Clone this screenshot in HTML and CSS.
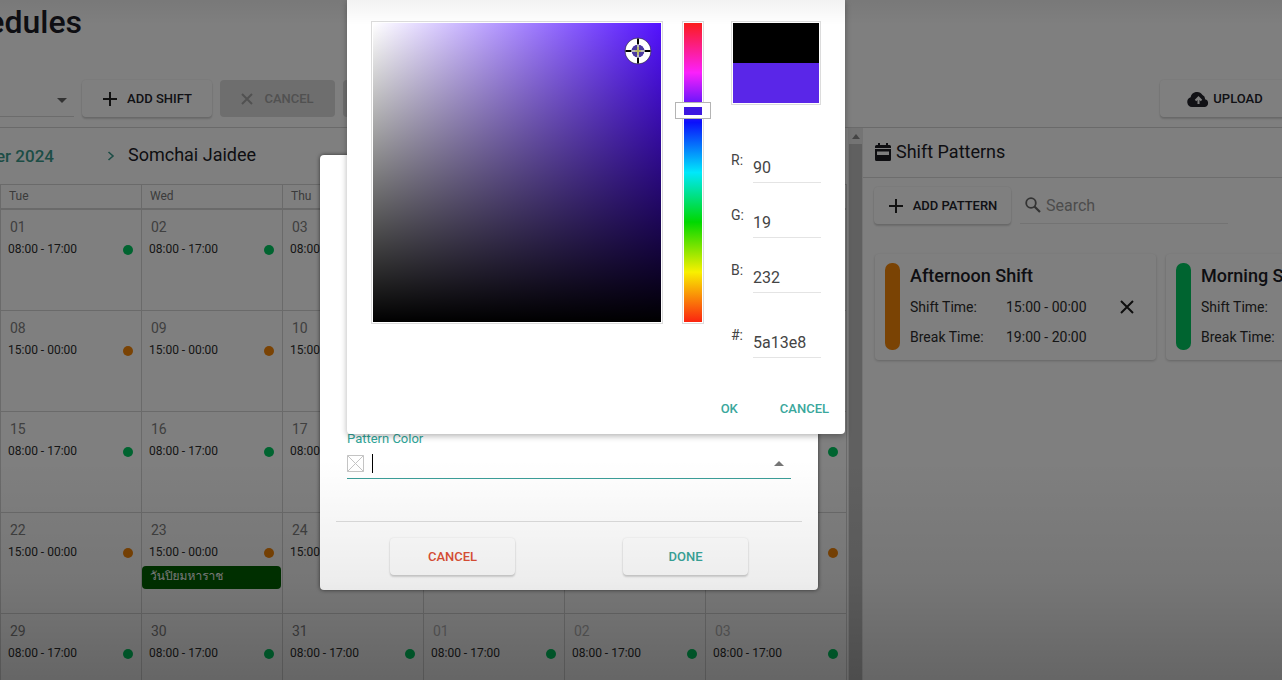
FILE: index.html
```html
<!DOCTYPE html>
<html lang="en">
<head>
<meta charset="utf-8">
<title>Schedules</title>
<link rel="stylesheet" href="styles.css">
</head>
<body>
<div class="app">
  <header class="page-head"><h1 class="page-title">Schedules</h1></header>
  <div class="toolbar">
    <div class="toolbar-select"><svg width="10" height="5" viewBox="0 0 10 5"><path d="M0 0h10L5 5z" fill="#666"/></svg></div>
    <button class="btn btn-add"><svg width="16" height="16" viewBox="0 0 16 16"><path d="M8 1v14M1 8h14" stroke="#222" stroke-width="2"/></svg>ADD SHIFT</button>
    <button class="btn btn-disabled" disabled><svg width="12" height="12" viewBox="0 0 12 12"><path d="M1 1l10 10M11 1L1 11" stroke="#a2a2a2" stroke-width="2"/></svg>CANCEL</button>
    <button class="btn btn-disabled btn-blank" disabled aria-label="Save"></button>
    <button class="btn btn-upload"><svg width="22" height="16" viewBox="0 0 22 16"><path d="M5 16a5 5 0 0 1-1.400-9.700A6.500 6.500 0 0 1 15.500 4 4 4 0 0 1 18 8.200 4 4 0 0 1 18 16z" fill="#22222a"/><path d="M11.500 13V7M8.500 9.500l3-3 3 3" stroke="#fff" stroke-width="2" fill="none"/></svg>UPLOAD</button>
  </div>
  <main class="main">
    <section class="calendar">
      <div class="cal-head">
        <div class="month">October 2024</div>
        <button class="next" aria-label="Next month"><svg width="8" height="10" viewBox="0 0 8 10"><path d="M1.500 1L6 5 1.500 9" stroke="#3a9a8c" stroke-width="1.600" fill="none"/></svg></button>
        <h2 class="person">Somchai Jaidee</h2>
      </div>
      <table class="cal">
        <thead><tr><th>Tue</th><th>Wed</th><th>Thu</th><th>Fri</th><th>Sat</th><th>Sun</th></tr></thead>
        <tbody id="weeks"></tbody>
      </table>
    </section>
    <div class="scroll"><div class="scroll-up"><svg width="8" height="5" viewBox="0 0 8 5"><path d="M0 5h8L4 0z" fill="#8a8a8a"/></svg></div><div class="scroll-thumb"></div></div>
    <aside class="patterns">
      <h2 class="patterns-title"><svg width="16" height="18" viewBox="0 0 16 18"><path d="M1.500 2H3V0h2v2h6V0h2v2h1.500Q16 2 16 3.500V5H0V3.500Q0 2 1.500 2zM0 6h16v10.500q0 1.500-1.500 1.500h-13Q0 18 0 16.500zM2 8.500V12h12V8.500z" fill="#1c1c22" fill-rule="evenodd"/></svg>Shift Patterns</h2>
      <div class="patterns-tools">
        <button class="btn btn-pattern"><svg width="16" height="16" viewBox="0 0 16 16"><path d="M8 1v14M1 8h14" stroke="#222" stroke-width="2"/></svg>ADD PATTERN</button>
        <label class="search"><svg width="16" height="16" viewBox="0 0 16 16"><circle cx="6" cy="6" r="4.800" stroke="#666" stroke-width="1.800" fill="none"/><path d="M9.500 9.500L15 15" stroke="#666" stroke-width="2.200"/></svg><input type="text" placeholder="Search" aria-label="Search"></label>
      </div>
      <div class="cards">
        <article class="card"><div class="stripe orange"></div>
          <div class="card-body"><h3>Afternoon Shift</h3><dl><dt>Shift Time:</dt><dd>15:00 - 00:00</dd><dt>Break Time:</dt><dd>19:00 - 20:00</dd></dl></div>
          <button class="remove" aria-label="Remove"><svg width="14" height="14" viewBox="0 0 14 14"><path d="M1 1l12 12M13 1L1 13" stroke="#1c1c1c" stroke-width="2"/></svg></button></article>
        <article class="card"><div class="stripe green"></div>
          <div class="card-body"><h3>Morning Shift</h3><dl><dt>Shift Time:</dt><dd>08:00 - 17:00</dd><dt>Break Time:</dt><dd>12:00 - 13:00</dd></dl></div></article>
      </div>
    </aside>
  </main>
</div>
<div class="backdrop"></div>
<div class="dialog" role="dialog" aria-label="Pattern">
  <div class="field">
    <label for="color">Pattern Color</label>
    <div class="field-row">
      <svg width="17" height="17" viewBox="0 0 17 17"><path d="M.5.5h16v16H.5zM.5.5l16 16M16.500.5l-16 16" stroke="#c4c4c4" fill="none"/></svg>
      <span class="caret"></span><input id="color" type="text">
      <svg width="10" height="5" viewBox="0 0 10 5"><path d="M0 5h10L5 0z" fill="#757575"/></svg>
    </div>
  </div>
  <div class="dialog-actions">
    <div><button class="btn btn-wide danger">CANCEL</button></div>
    <div><button class="btn btn-wide accent">DONE</button></div>
  </div>
</div>
<div class="picker" role="dialog" aria-label="Color">
  <div class="picker-body">
    <div class="frame shade"><div class="shade-fill"></div>
      <svg class="cross" width="28" height="28" viewBox="0 0 28 28"><circle cx="14" cy="14" r="9.500" fill="none" stroke="#fff" stroke-width="6.500"/><circle cx="14" cy="14" r="13" fill="none" stroke="#333" stroke-width=".6"/><circle cx="14" cy="14" r="6.300" fill="#4b3aa0"/><path d="M14 1.500v6M14 20.500v6M1.500 14h6M20.500 14h6" stroke="#000" stroke-width="2"/><path d="M14 7.500v13M7.500 14h13" stroke="#bbb" stroke-width="2"/><path d="M14 10v8M11 14h6" stroke="#b5b52c" stroke-width="1"/></svg></div>
    <div class="frame hue"><div class="hue-fill"></div><div class="hue-thumb"><span></span></div></div>
    <div class="side">
      <div class="frame preview"><div class="old"></div><div class="new"></div></div>
      <div class="values">
        <div class="value"><label for="r">R:</label><input id="r" type="text" value="90"></div>
        <div class="value"><label for="g">G:</label><input id="g" type="text" value="19"></div>
        <div class="value"><label for="b">B:</label><input id="b" type="text" value="232"></div>
        <div class="value hex"><label for="h">#:</label><input id="h" type="text" value="5a13e8"></div>
      </div>
    </div>
  </div>
  <div class="picker-actions"><button class="text-btn">OK</button><button class="text-btn">CANCEL</button></div>
</div>
<div class="vignette"></div>
<script src="calendar.js"></script>
</body>
</html>
```
FILE: styles.css
```css
* { box-sizing: border-box; }
body { margin: 0; height: 100vh; overflow: hidden; position: relative; background: #fff; color: #2c2c2c; font-family: Roboto, Tahoma, Loma, "Noto Sans Thai", "Noto Sans", sans-serif; font-size: 14px; }
h1, h2, h3, dl, dd { margin: 0; font-weight: 400; }
button, input { font-family: inherit; }
svg { display: block; flex: none; }
.app { display: flex; flex-direction: column; height: 100vh; }
.page-head { height: 80px; width: 82px; display: flex; justify-content: flex-end; flex: none; padding-top: 2px; }
.page-title { font-size: 32px; line-height: 40px; font-weight: 500; color: #1c1c26; }
.toolbar { display: flex; gap: 8px; height: 48px; flex: none; border-bottom: 1px solid #d4d4d4; padding-bottom: 10px; }
.toolbar-select { width: 74px; display: flex; align-items: center; justify-content: flex-end; padding: 5px 7px 0 0; border-bottom: 1px solid #d8d8d8; }
.btn { display: flex; align-items: center; justify-content: center; height: 37px; border: 0; border-radius: 4px; color: #22222a; font-size: 13px; line-height: 16px; font-weight: 500; padding: 0; flex: none; box-shadow: 0 2px 2px rgba(0,0,0,.16), 0 0 2px rgba(0,0,0,.12); background: #fff; }
.btn-add { width: 130px; gap: 9px; }
.btn-disabled { width: 115px; gap: 11px; background: #dcdcdc; color: #a2a2a2; box-shadow: none; }
.btn-upload { width: 138px; gap: 4px; margin-left: auto; margin-right: -16px; padding-right: 8px; }
.main { display: flex; flex: 1; min-height: 0; }
.calendar { width: 848px; flex: none; overflow: hidden; }
.cal-head { display: flex; align-items: center; height: 56px; color: #1c1c26; }
.month { width: 54px; display: flex; justify-content: flex-end; white-space: nowrap; font-size: 17px; font-weight: 500; color: #3a9a8c; }
.next { border: 0; background: none; padding: 0; margin: 0 13px 0 53px; }
.person { font-size: 18px; padding-bottom: 3px; }
.cal { border-collapse: collapse; table-layout: fixed; width: 847px; }
.cal th { height: 24px; border: 1px solid #d4d4d4; border-bottom-width: 2px; padding: 0 8px; text-align: left; font-size: 12px; font-weight: 400; color: #777; }
.cal td { height: 101px; border: 1px solid #d4d4d4; padding: 0; vertical-align: top; }
.cal tbody tr:first-child td { height: 102px; }
.date { padding: 9px 9px 0; line-height: 16px; font-size: 14px; color: #808080; }
.outside { color: #b5b5b5; }
.slot { display: flex; align-items: center; justify-content: space-between; padding: 5px 8px 0 7px; line-height: 18px; font-size: 12px; }
.dot { width: 10px; height: 10px; margin-top: 2px; border-radius: 50%; }
.green { background: #00c860; }
.orange { background: #f58608; }
.holiday { margin: 5px 1px 0 0; height: 23px; padding: 0 8px; border-radius: 4px; background: #006400; color: #fff; font-size: 12px; line-height: 20px; }
.scroll { width: 15px; flex: none; background: #e8e8e8; padding: 0 1px; }
.scroll-up { height: 16px; display: flex; align-items: center; justify-content: center; }
.scroll-thumb { height: 100%; background: #c1c1c1; }
.patterns { flex: 1; min-width: 0; overflow: hidden; }
.patterns-title { display: flex; align-items: center; gap: 5px; height: 50px; padding: 0 0 2px 12px; border-bottom: 1px solid #dadada; font-size: 18px; color: #1c1c26; }
.patterns-tools { display: flex; gap: 9px; padding: 9px 11px 0; }
.btn-pattern { width: 137px; gap: 9px; }
.search { display: flex; align-items: center; gap: 5px; width: 208px; height: 37px; padding-left: 5px; border-bottom: 1px solid #e6e6e6; }
.search input { width: 160px; border: 0; padding: 0; background: none; font-size: 16px; }
.search input::placeholder { color: #999; opacity: 1; }
.cards { display: flex; gap: 10px; padding: 30px 12px 0; }
.card { display: flex; flex: none; width: 281px; height: 106px; padding: 9px 10px; border-radius: 4px; box-shadow: 0 1px 3px rgba(0,0,0,.22); }
.stripe { width: 15px; height: 87px; border-radius: 7px; margin-right: 10px; flex: none; }
.card-body { width: 200px; }
.card h3 { font-size: 18px; line-height: 26px; font-weight: 500; color: #1c1c26; }
.card dl { display: grid; grid-template-columns: 96px 1fr; line-height: 30px; padding-top: 3px; font-size: 14px; }
.remove { border: 0; background: none; padding: 0; align-self: center; margin-left: 10px; }
.backdrop { position: absolute; inset: 0; background: rgba(0,0,0,.5); }
.dialog { position: absolute; left: 320px; top: 155px; width: 498px; height: 435px; border-radius: 4px; background: #fff; box-shadow: 0 0 4px rgba(0,0,0,.6); display: flex; flex-direction: column; justify-content: flex-end; padding: 0 16px; }
.field { padding: 0 11px; }
.field label { font-size: 13px; line-height: 16px; color: #2ea497; }
.field-row { display: flex; align-items: center; height: 32px; border-bottom: 1px solid #3a9d98; padding: 2px 7px 0 0; }
.caret { width: 1px; height: 19px; background: #000; margin-left: 8px; }
.field-row input { flex: 1; min-width: 0; border: 0; background: none; outline: 0; }
.dialog-actions { display: grid; grid-template-columns: 1fr 1fr; margin-top: 42px; padding: 16px 0 15px; border-top: 1px solid #dedede; }
.dialog-actions > div { display: flex; justify-content: center; }
.btn-wide { width: 125px; }
.danger { color: #df5136; }
.accent { color: #3aa79c; }
.picker { position: absolute; left: 347px; top: 0; width: 498px; padding: 21px 24px 8px; border-radius: 0 0 4px 4px; background: #fff; box-shadow: 0 2px 6px rgba(0,0,0,.3); }
.picker-body { display: flex; align-items: flex-start; height: 369px; }
.frame { border: 1px solid #dcdcdc; padding: 1px; position: relative; }
.shade { width: 292px; height: 303px; }
.shade-fill { height: 100%; background: linear-gradient(to top, #000, transparent), linear-gradient(to right, #fff, #5312ff); }
.cross { position: absolute; left: 252px; top: 15px; }
.hue { width: 22px; height: 303px; margin: 0 27px 0 19px; }
.hue-fill { height: 100%; background: linear-gradient(#fb1c1c, #fb20fb 16.600%, #0a10fb 33.300%, #00e8fb 50%, #00d800 66.600%, #f8f000 83.300%, #fb2410); }
.hue-thumb { position: absolute; left: -8px; top: 80px; width: 36px; height: 17px; background: #fff; border: 1px solid #b4b4b4; display: flex; justify-content: center; align-items: center; }
.hue-thumb span { width: 18px; height: 8px; background: #3d18e0; }
.side { width: 90px; }
.preview { height: 84px; }
.old { height: 40px; background: #000; }
.new { height: 40px; background: #5a26e8; }
.values { padding-top: 23px; }
.value { display: flex; align-items: flex-end; height: 55px; font-size: 14px; color: #444; }
.value label { width: 22px; line-height: 16px; padding-bottom: 15px; }
.value input { width: 68px; height: 32px; border: 0; border-bottom: 1px solid #e4e4e4; padding: 2px 0 0; font-size: 16px; color: #444; background: none; }
.hex { margin-top: 10px; }
.picker-actions { display: flex; justify-content: flex-end; gap: 26px; margin-right: -16px; }
.text-btn { height: 36px; border: 0; background: none; padding: 0 8px; font-size: 13px; font-weight: 500; color: #3aa79c; }
.vignette { position: absolute; inset: 0; pointer-events: none; background: linear-gradient(rgba(0,0,0,.05), transparent 25px), linear-gradient(transparent 460px, rgba(0,0,0,.07) 580px, rgba(0,0,0,.2) 680px); }
```
FILE: calendar.js
```js
const weeks = [
  ["01", "02", "03", "04", "05", "06"],
  ["08", "09", "10", "11", "12", "13"],
  ["15", "16", "17", "18", "19", "20"],
  ["22", "23", "24", "25", "26", "27"],
  ["29", "30", "31", "01", "02", "03"]
];
document.getElementById("weeks").innerHTML = weeks.map((days, w) => {
  const late = w % 2 === 1;
  return "<tr>" + days.map((d, i) => {
    const outside = w === 4 && i > 2 ? " outside" : "";
    const holiday = d === "23" ? '<div class="holiday">วันปิยมหาราช</div>' : "";
    return `<td><div class="date${outside}">${d}</div><div class="slot">${late ? "15:00 - 00:00" : "08:00 - 17:00"}<span class="dot ${late ? "orange" : "green"}"></span></div>${holiday}</td>`;
  }).join("") + "</tr>";
}).join("");
```
